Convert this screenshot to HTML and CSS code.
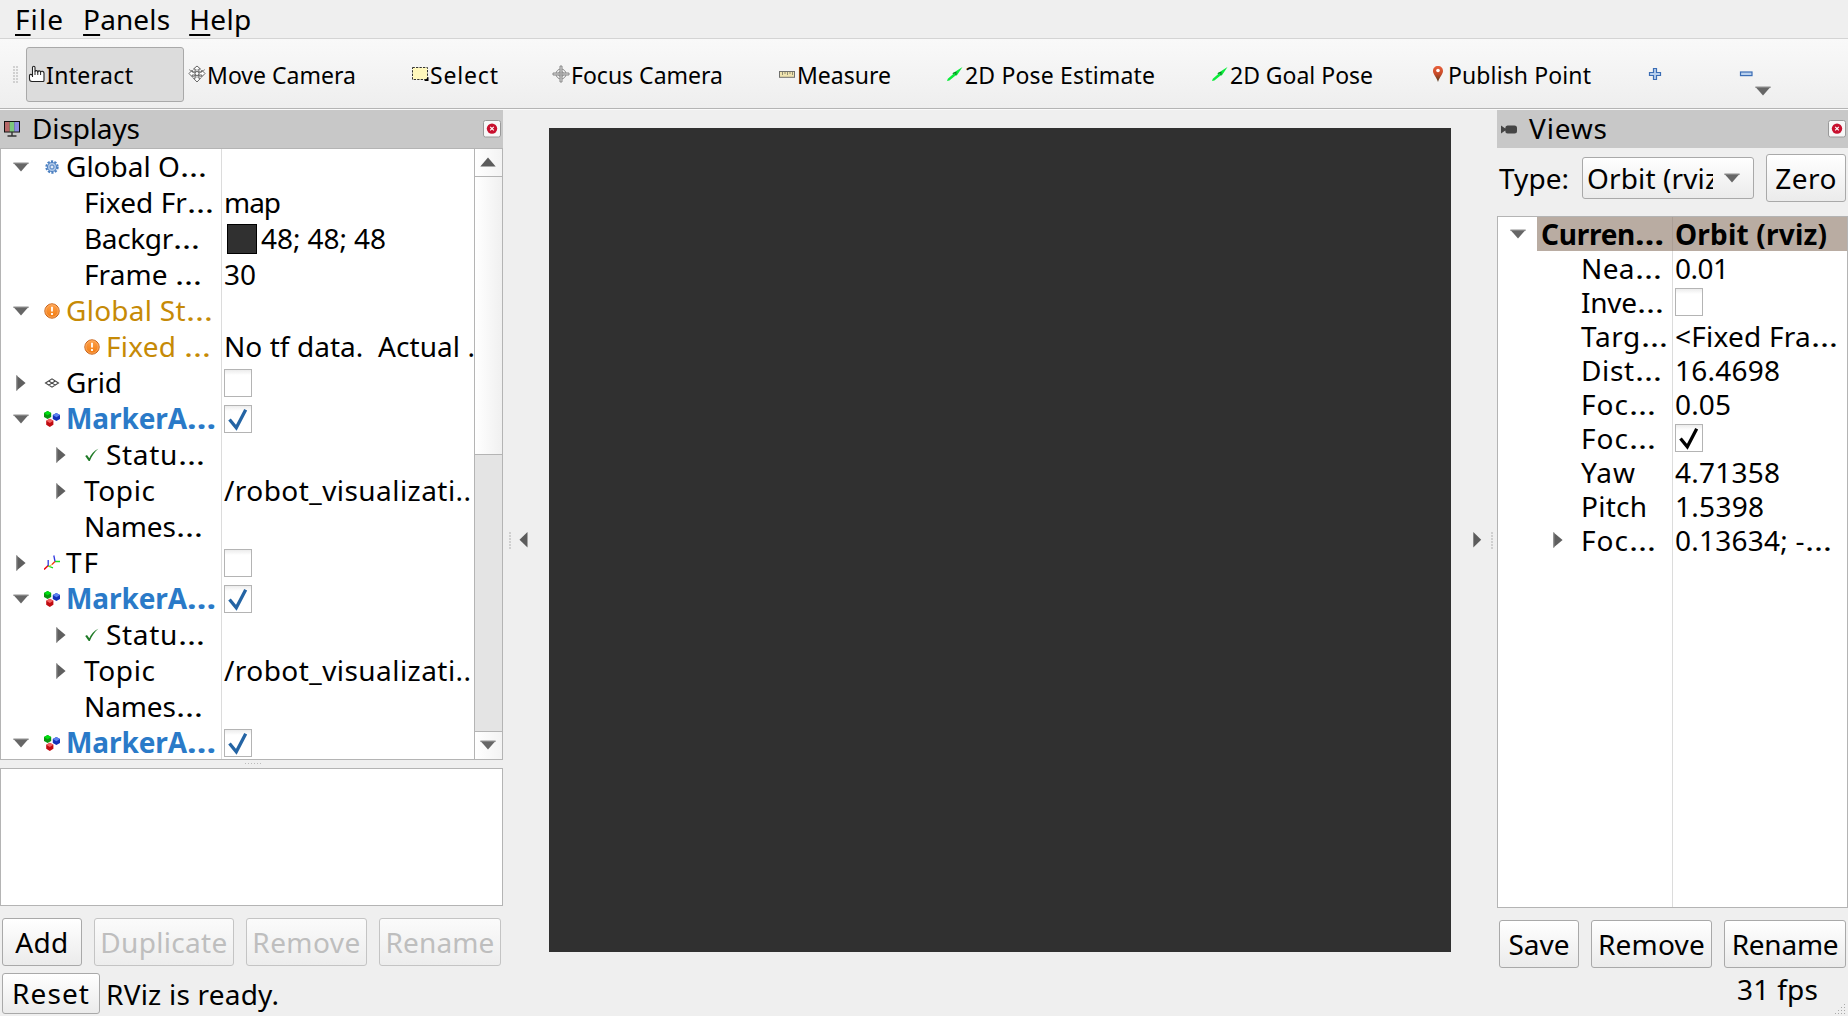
FILE: index.html
```html
<!DOCTYPE html>
<html lang="en">
<head>
<meta charset="utf-8">
<title>RViz</title>
<link rel="stylesheet" href="styles.css">
</head>
<body>
<svg class="defs" width="0" height="0" aria-hidden="true">
  <defs>
    <linearGradient id="orange" x1="0" y1="0" x2="0" y2="1"><stop offset="0" stop-color="#ffa14a"/><stop offset="1" stop-color="#f07a10"/></linearGradient>
    <linearGradient id="pin" x1="0" y1="0" x2="0" y2="1"><stop offset="0" stop-color="#e8603c"/><stop offset=".5" stop-color="#c84a28"/><stop offset="1" stop-color="#4a3a1c"/></linearGradient>
    <symbol id="down" viewBox="0 0 18 18"><path d="M1.3 4.8h15.4L9 13.6z" fill="#666"/><path d="M1.3 4.8h15.4v1H1.3z" fill="#8a8a8a"/></symbol>
    <symbol id="up" viewBox="0 0 18 18"><path d="M1.3 13.4h15.4L9 4.6z" fill="#5c5c5c"/></symbol>
    <symbol id="right" viewBox="0 0 18 18"><path d="M4.3 1.3v15.4L13.6 9z" fill="#5f5f5f"/><path d="M4.3 1.3v15.4h1V1.3z" fill="#999"/></symbol>
    <symbol id="gear" viewBox="0 0 16 16"><circle cx="8" cy="8" r="5.600" fill="none" stroke="#4a7fc0" stroke-width="2.200" stroke-dasharray="2.200 1.320"/><circle cx="8" cy="8" r="4.600" fill="#a9c4e6" stroke="#5284c4"/><circle cx="8" cy="8" r="2" fill="#dfe9f6" stroke="#5284c4"/></symbol>
    <symbol id="warn" viewBox="0 0 16 16"><circle cx="8" cy="8" r="7.200" fill="url(#orange)" stroke="#c8641a"/><circle cx="8" cy="8" r="6.200" fill="none" stroke="#ffb878" stroke-width=".7"/><path d="M8 3.800v4.800M8 10v2" stroke="#fff" stroke-width="1.800"/></symbol>
    <symbol id="grid" viewBox="0 0 16 16"><path d="M1.500 8 8 3.900 14.500 8 8 12.100zM4.700 6l6.600 4.100M11.300 6 4.700 10.100" fill="none" stroke="#444" stroke-width="1.100"/></symbol>
    <symbol id="marker" viewBox="0 0 16 16"><path d="M3.600 0 7.200 2v4L3.600 8 0 6V2z" fill="#0a9410"/><path d="M3.600 0 7.200 2 3.600 4.200 0 2z" fill="#00e010"/><path d="M12.400 2 16 4v4l-3.600 2-3.600-2V4z" fill="#1430b8"/><path d="M12.400 2 16 4l-3.600 2.200L8.800 4z" fill="#5c80f0"/><path d="M5.800 7.800 9.400 9.800v4l-3.600 2.100-3.600-2.100v-4z" fill="#c00a10"/><path d="M5.800 7.800 9.400 9.800 5.800 12 2.200 9.800z" fill="#f46060"/></symbol>
    <symbol id="ok" viewBox="0 0 16 16"><path d="M1.200 9 3 8l2.300 3.200C7.200 7 9.800 4 14.300 1.800 10.500 5.200 8 8.800 5.800 14H4.700z" fill="#1f7a26"/></symbol>
    <symbol id="tf" viewBox="0 0 16 16"><path d="M4.200 10.500 0 14.500" stroke="#f00010" stroke-width="1.600"/><path d="M4.200 11V5" stroke="#3038e0" stroke-width="1.300"/><path d="M4 11l5 1.800M11 6.500h5" stroke="#18e020" stroke-width="1.300"/><path d="M11 6.500 9.800.5" stroke="#3038e0" stroke-width="1.300"/><path d="M11 6.500 8 9.500" stroke="#f03010" stroke-width="1.300"/><path d="m8 9.500-3.500 2" stroke="#e8c020" stroke-width="1"/></symbol>
    <symbol id="check" viewBox="0 0 28 28"><path d="M5.500 14.500 12.300 22.800 21.700 4.700" fill="none" stroke="currentColor" stroke-width="3.300"/></symbol>
    <symbol id="close" viewBox="0 0 18 18"><rect x=".5" y=".5" width="17" height="16.500" rx="2" fill="#f7f7f7" stroke="#999"/><circle cx="9" cy="8.600" r="5.200" fill="#c8102e"/><path d="m7.200 6.800 3.600 3.600M10.800 6.800 7.200 10.400" stroke="#fff" stroke-width="1.200"/></symbol>
    <symbol id="arrow" viewBox="0 0 16 16"><path d="m0 15 .800-2.200L6 8.300l-.300-1L15.500 1 9.800 9.600l-.900-.300-6.500 5.200z" fill="#0cec3c"/><path d="m5.800 7.400 3.600-1.200M8.800 9.200l.200-2.500" stroke="#087a20" stroke-width="1"/></symbol>
  </defs>
</svg>

<nav class="menubar">
  <span data-w="48"><u>F</u>ile</span>
  <span data-w="87"><u>P</u>anels</span>
  <span data-w="62"><u>H</u>elp</span>
</nav>

<div class="toolbar">
  <i class="dots vertical"></i>
  <div class="tool interact active">
    <svg width="18" height="18" viewBox="0 0 18 18"><path d="M4.500 10V2.500C4.500.8 7 .8 7 2.500V6.500C7.300 5.300 9.600 5.400 9.800 6.700 10.300 5.500 12.400 5.700 12.600 6.900 13.500 5.900 16 6.200 16 8V15.500Q16 16.500 15 16.500H4Q1.500 16.500 1.500 14V10.500C1.500 9 3.500 9 4.500 10.500V12" fill="#fff" stroke="#222" stroke-width="1.100"/><path d="M7 6v4M9.800 6.700V10M12.600 7v3" stroke="#222"/></svg>
    <span data-w="87">Interact</span>
  </div>
  <div class="tool move">
    <svg width="18" height="18" viewBox="0 0 18 18"><g fill="#fff" stroke="#555" stroke-width=".9"><path d="M9 1 12.500 4H10.800v3h3V5.200L17 8.500l-3.200 3.300V10h-3v3.300h1.700L9 17l-3.500-3.700h1.700V10h-3v1.800L1 8.500l3.200-3.300V7h3V4H5.500z"/><path d="M1 4.500 14 12.500M17 4.500 4 12.500M9 4v9" stroke-width=".6"/><circle cx="9" cy="8.500" r="2"/></g></svg>
    <span data-w="149">Move Camera</span>
  </div>
  <div class="tool select">
    <svg width="18" height="16" viewBox="0 0 18 16"><rect x="1.500" y="1.500" width="15" height="12" fill="#fff8bc" stroke="#333" stroke-dasharray="2.300 1.200"/><path d="m17.500 11-4.500 4h4.500z" fill="#000"/></svg>
    <span data-w="68">Select</span>
  </div>
  <div class="tool focus">
    <svg width="18" height="18" viewBox="0 0 18 18"><g fill="none" stroke="#888"><circle cx="9" cy="9" r="5"/><circle cx="9" cy="9" r="2.600"/><path d="M8 1h2v16H8zM1 8h16v2H1z" fill="#ddd"/></g><path d="M9 4v10M4 9h10" stroke="#aaa"/></svg>
    <span data-w="152">Focus Camera</span>
  </div>
  <div class="tool measure">
    <svg width="18" height="18" viewBox="0 0 18 18"><rect x="1.500" y="6.500" width="15" height="5.800" fill="#f0e4b0" stroke="#70706c"/><path d="M4.500 7v3M7 7v2M9.500 7v3M12 7v2M14.500 7v3" stroke="#88846c" stroke-width=".9"/></svg>
    <span data-w="94">Measure</span>
  </div>
  <div class="tool pose">
    <svg width="16" height="16"><use href="#arrow"/></svg>
    <span data-w="190">2D Pose Estimate</span>
  </div>
  <div class="tool goal">
    <svg width="16" height="16"><use href="#arrow"/></svg>
    <span data-w="143">2D Goal Pose</span>
  </div>
  <div class="tool publish">
    <svg width="12" height="18" viewBox="0 0 12 18"><path d="M6 1C3 1 1 3 1 6c0 3.200 3.300 5.500 5 11 1.700-5.500 5-7.800 5-11 0-3-2-5-5-5z" fill="url(#pin)"/><circle cx="6" cy="5.500" r="1.800" fill="#fff"/></svg>
    <span data-w="143">Publish Point</span>
  </div>
  <svg class="plus" width="14" height="14" viewBox="0 0 14 14"><path d="M5.500 1.500h3v4h4v3h-4v4h-3v-4h-4v-3h4z" fill="#b8d0ee" stroke="#3b6db5" stroke-width="1.200"/></svg>
  <svg class="minus" width="14" height="14" viewBox="0 0 14 14"><rect x="1.500" y="5" width="11.500" height="3.600" fill="#b8d0ee" stroke="#3b6db5" stroke-width="1.200"/></svg>
  <svg class="more" width="18" height="18"><use href="#down"/></svg>
</div>

<main class="workspace">
  <section class="dock displays">
    <header class="dock-title">
      <svg width="18" height="18" viewBox="0 0 18 18"><rect x="1.500" y="1.500" width="15" height="10.500" fill="#222" stroke="#111"/><path d="M2 2h4.700v9.500H2z" fill="#b66868"/><path d="M6.700 2h4.600v9.500H6.700z" fill="#7cc87c"/><path d="M11.300 2H16v9.500h-4.700z" fill="#8c8ce0"/><path d="M9 12v3.500M4.500 16h9" stroke="#333" stroke-width="1.400"/></svg>
      <span data-w="108">Displays</span>
      <svg class="close" width="18" height="18"><use href="#close"/></svg>
    </header>
    <div class="tree left">
      <div class="rows">
        <div class="row"><div class="name"><svg class="exp"><use href="#down"/></svg><svg class="ico"><use href="#gear"/></svg><span data-w="141">Global O…</span></div><div class="value"></div></div>
        <div class="row"><div class="name leaf"><span data-w="130">Fixed Fr…</span></div><div class="value"><span data-w="57">map</span></div></div>
        <div class="row"><div class="name leaf"><span data-w="116">Backgr…</span></div><div class="value"><i class="swatch"></i><span data-w="125">48; 48; 48</span></div></div>
        <div class="row"><div class="name leaf"><span data-w="118">Frame …</span></div><div class="value"><span data-w="32">30</span></div></div>
        <div class="row warning"><div class="name"><svg class="exp"><use href="#down"/></svg><svg class="ico"><use href="#warn"/></svg><span data-w="147">Global St…</span></div><div class="value"></div></div>
        <div class="row warning"><div class="name child"><svg class="exp"></svg><svg class="ico"><use href="#warn"/></svg><span data-w="105">Fixed …</span></div><div class="value"><span data-w="251">No tf data.&nbsp; Actual .</span></div></div>
        <div class="row"><div class="name"><svg class="exp"><use href="#right"/></svg><svg class="ico"><use href="#grid"/></svg><span data-w="56">Grid</span></div><div class="value"><i class="box"></i></div></div>
        <div class="row display"><div class="name"><svg class="exp"><use href="#down"/></svg><svg class="ico"><use href="#marker"/></svg><span data-w="150">MarkerA…</span></div><div class="value"><i class="box"><svg><use href="#check"/></svg></i></div></div>
        <div class="row"><div class="name child"><svg class="exp"><use href="#right"/></svg><svg class="ico"><use href="#ok"/></svg><span data-w="99">Statu…</span></div><div class="value"></div></div>
        <div class="row"><div class="name child"><svg class="exp"><use href="#right"/></svg><span data-w="71">Topic</span></div><div class="value"><span data-w="247">/robot_visualizati..</span></div></div>
        <div class="row"><div class="name leaf"><span data-w="119">Names…</span></div><div class="value"></div></div>
        <div class="row"><div class="name"><svg class="exp"><use href="#right"/></svg><svg class="ico"><use href="#tf"/></svg><span data-w="32">TF</span></div><div class="value"><i class="box"></i></div></div>
        <div class="row display"><div class="name"><svg class="exp"><use href="#down"/></svg><svg class="ico"><use href="#marker"/></svg><span data-w="150">MarkerA…</span></div><div class="value"><i class="box"><svg><use href="#check"/></svg></i></div></div>
        <div class="row"><div class="name child"><svg class="exp"><use href="#right"/></svg><svg class="ico"><use href="#ok"/></svg><span data-w="99">Statu…</span></div><div class="value"></div></div>
        <div class="row"><div class="name child"><svg class="exp"><use href="#right"/></svg><span data-w="71">Topic</span></div><div class="value"><span data-w="247">/robot_visualizati..</span></div></div>
        <div class="row"><div class="name leaf"><span data-w="119">Names…</span></div><div class="value"></div></div>
        <div class="row display"><div class="name"><svg class="exp"><use href="#down"/></svg><svg class="ico"><use href="#marker"/></svg><span data-w="150">MarkerA…</span></div><div class="value"><i class="box"><svg><use href="#check"/></svg></i></div></div>
      </div>
      <div class="scrollbar">
        <div class="step top"><svg class="exp"><use href="#up"/></svg></div>
        <div class="thumb"></div>
        <div class="track"></div>
        <div class="step bottom"><svg class="exp"><use href="#down"/></svg></div>
      </div>
    </div>
    <div class="splitter"><i class="dots horizontal"></i></div>
    <div class="details"></div>
    <div class="buttons">
      <button class="add"><span data-w="53">Add</span></button>
      <button class="duplicate" disabled><span data-w="127">Duplicate</span></button>
      <button class="remove" disabled><span data-w="108">Remove</span></button>
      <button class="rename" disabled><span data-w="109">Rename</span></button>
    </div>
    <footer class="status">
      <button class="reset"><span data-w="77">Reset</span></button>
      <span data-w="173">RViz is ready.</span>
    </footer>
  </section>

  <div class="handle before"><i class="dots vertical"></i><svg width="9" height="16"><path d="M8.500 0v15.500L.5 7.700z"/></svg></div>
  <div class="viewport"></div>
  <div class="handle after"><svg width="9" height="16"><path d="M.3 0v15.500l7.900-7.800z"/></svg><i class="dots vertical"></i></div>

  <section class="dock views">
    <header class="dock-title">
      <svg width="18" height="18" viewBox="0 0 18 18"><path d="m1 5.500 4.300 3V8Q5.300 5.500 7.500 5.500h7Q17 5.500 17 8v3q0 2.500-2.500 2.500h-7Q5.300 13.500 5.300 11v-.5L1 13.500z" fill="#454545"/></svg>
      <span data-w="78">Views</span>
      <svg class="close" width="18" height="18"><use href="#close"/></svg>
    </header>
    <div class="type">
      <span data-w="70">Type:</span>
      <div class="combo"><div class="current"><span data-w="131">Orbit (rviz</span></div><svg class="exp"><use href="#down"/></svg></div>
      <button class="zero"><span data-w="61">Zero</span></button>
    </div>
    <div class="tree right">
      <div class="row selected"><div class="name root"><svg class="exp"><use href="#down"/></svg><div class="fill"><span data-w="123">Curren…</span></div></div><div class="value"><span data-w="152">Orbit (rviz)</span></div></div>
      <div class="row"><div class="name"><span data-w="81">Nea…</span></div><div class="value"><span data-w="54">0.01</span></div></div>
      <div class="row"><div class="name"><span data-w="83">Inve…</span></div><div class="value"><i class="box"></i></div></div>
      <div class="row"><div class="name"><span data-w="87">Targ…</span></div><div class="value"><span data-w="163">&lt;Fixed Fra…</span></div></div>
      <div class="row"><div class="name"><span data-w="81">Dist…</span></div><div class="value"><span data-w="105">16.4698</span></div></div>
      <div class="row"><div class="name"><span data-w="75">Foc…</span></div><div class="value"><span data-w="56">0.05</span></div></div>
      <div class="row"><div class="name"><span data-w="75">Foc…</span></div><div class="value"><i class="box"><svg><use href="#check"/></svg></i></div></div>
      <div class="row"><div class="name"><span data-w="54">Yaw</span></div><div class="value"><span data-w="105">4.71358</span></div></div>
      <div class="row"><div class="name"><span data-w="66">Pitch</span></div><div class="value"><span data-w="89">1.5398</span></div></div>
      <div class="row"><div class="name nested"><svg class="exp"><use href="#right"/></svg><span data-w="75">Foc…</span></div><div class="value"><span data-w="157">0.13634; -…</span></div></div>
      <div class="rest"></div>
    </div>
    <div class="buttons">
      <button class="save"><span data-w="61">Save</span></button>
      <button class="remove"><span data-w="107">Remove</span></button>
      <button class="rename"><span data-w="107">Rename</span></button>
    </div>
    <footer class="fps">
      <span data-w="81">31 fps</span>
      <svg class="grip" width="12" height="12"><path d="M10.500 0v12M7.500 3v9M4.500 6v6M1.500 9v3" stroke="#aaa" stroke-dasharray="1 2"/></svg>
    </footer>
  </section>
</main>
<script src="labels.js"></script>
</body>
</html>
```

FILE: labels.js
```js
// Tracks each label so that it fills the width given in data-w.
// A closing ellipsis is set wider than the text it follows.
document.querySelectorAll('[data-w]').forEach(function (label) {
  var target = Number(label.dataset.w);
  if (label.textContent.endsWith('…')) {
    label.innerHTML = label.innerHTML.replace('…', '<b class="ellipsis">…</b>');
  }
  var natural = label.getBoundingClientRect().width;
  var gaps = label.textContent.length - 1;
  label.style.letterSpacing = (target - natural) / gaps + 'px';
});
```

FILE: styles.css
```css
* { box-sizing: border-box; }

body {
  margin: 0;
  width: 1848px;
  height: 1016px;
  overflow: hidden;
  display: flex;
  flex-direction: column;
  background: #efefef;
  color: #000;
  font: 28px/34px "Noto Sans", "Open Sans", sans-serif;
}

svg { display: block; flex: none; }
.defs { position: absolute; }
span { white-space: pre; flex: none; }
.ellipsis {
  display: inline-block;
  margin-right: 5px;
  font-weight: inherit;
  letter-spacing: 0;
  transform: scaleX(1.22);
  transform-origin: 0 0;
}

/* menu */
.menubar {
  flex: none;
  height: 39px;
  display: flex;
  padding: 2px 0 0 15px;
  border-bottom: 1px solid #d4d4d4;
}
.menubar span { margin-right: 19px; }
.menubar u { text-decoration-thickness: 2px; text-underline-offset: 4px; text-decoration-skip-ink: none; }

/* toolbar */
.toolbar {
  flex: none;
  height: 71px;
  display: flex;
  align-items: center;
  padding: 0 0 0 13px;
  border-bottom: 1px solid #fafafa;
  box-shadow: inset 0 -1px #b4b4b4;
  background: linear-gradient(#f9f9f9, #eee);
  font-size: 23px;
}
.tool { display: flex; align-items: center; height: 55px; flex: none; }
.tool svg { margin-bottom: 1px; }
.tool span { margin-left: 1px; padding-top: 1px; }
.interact { width: 158px; margin-left: 8px; padding-left: 1px; }
.interact span { margin-left: 0; }
.active { border: 1px solid #a9a9a9; border-radius: 3px; background: #dcdcdc; }
.move { margin-left: 4px; width: 223px; }
.select { width: 141px; }
.focus { width: 226px; }
.measure { width: 169px; }
.pose { width: 265px; }
.pose span, .goal span { margin-left: 2px; }
.goal { width: 220px; }
.publish { width: 216px; }
.publish span { margin-left: 4px; }
.plus { margin-right: 77px; }
.minus { margin-right: 1px; }
.more { margin-top: 33px; }

.dots { display: block; flex: none; }
.dots.vertical {
  width: 5px;
  height: 17px;
  background: radial-gradient(circle at 1px 1px, #c4c4c4 .6px, transparent 1px) 0 0 / 3px 3px;
}
.dots.horizontal {
  width: 17px;
  height: 1px;
  background: repeating-linear-gradient(90deg, #bbb 0 1px, transparent 1px 3px);
}

/* docks */
.workspace { flex: 1; display: flex; min-height: 0; }
.dock { display: flex; flex-direction: column; flex: none; }
.dock span { padding-bottom: 1px; }
.displays { width: 503px; }
.views { width: 351px; }
.dock-title {
  height: 38px;
  flex: none;
  display: flex;
  align-items: center;
  padding-left: 3px;
  background: #c8c8c8;
}
.dock-title span { margin-left: 11px; padding-bottom: 2px; }
.dock-title .close { margin: 0 2px 1px auto; }

.tree { display: flex; background: #fff; border: 1px solid #b4b4b4; flex: none; }
.row { display: flex; flex: none; }
.name { display: flex; align-items: center; flex: none; border-right: 1px solid #dcdcdc; }
.value { display: flex; align-items: center; flex: 1; min-width: 0; }
.exp { width: 18px; height: 18px; margin-bottom: 1px; }
.ico { width: 16px; height: 16px; margin-bottom: 1px; }
.box {
  display: block;
  flex: none;
  width: 28px;
  height: 28px;
  border: 1px solid #b4b4b4;
  background: linear-gradient(#ececec, #fff 5px);
}
.box svg { width: 28px; height: 28px; margin: -1px; }

.left { height: 612px; }
.left .rows { width: 473px; overflow: hidden; }
.left .row { height: 36px; }
.left .row span { padding-bottom: 2px; }
.left .name { width: 221px; padding-left: 11px; }
.left .child { padding-left: 51px; }
.left .leaf { padding-left: 83px; }
.left .name .exp + .ico { margin-left: 14px; }
.left .name .ico + span { margin-left: 6px; }
.left .name.child .exp + span { margin-left: 14px; }
.left .value { padding-left: 2px; }
.left .value .swatch + span { margin-left: 4px; }
.left .box { color: #2464a4; }
.swatch { width: 30px; height: 30px; margin-left: 3px; background: #303030; border: 1px solid #000; }
.warning .name span { color: #c68a06; }
.display .name span { color: #2a7ac8; font-weight: bold; }

.scrollbar { width: 28px; display: flex; flex-direction: column; border-left: 1px solid #b4b4b4; }
.step { display: flex; align-items: center; justify-content: center; background: linear-gradient(90deg, #fff, #f3f3f3); }
.step .exp { margin-right: 1px; }
.top { height: 28px; border-bottom: 1px solid #b4b4b4; }
.thumb { height: 278px; border-bottom: 1px solid #b4b4b4; background: linear-gradient(90deg, #fff, #f0f0f0); }
.track { flex: 1; background: #e4e4e4; }
.bottom { height: 28px; border-top: 1px solid #b4b4b4; }

.splitter { height: 8px; display: flex; justify-content: center; padding: 3px 0 0 3px; }
.details { height: 138px; background: #fff; border: 1px solid #b4b4b4; }

button {
  display: flex;
  align-items: center;
  justify-content: center;
  flex: none;
  height: 48px;
  padding: 0;
  border: 1px solid #a9a9a9;
  border-radius: 3px;
  background: linear-gradient(#fff, #ebebeb);
  color: #000;
  font: inherit;
}
button:disabled { color: #bebebe; border-color: #c4c4c4; background: linear-gradient(#fbfbfb, #ededed); }
.buttons { display: flex; gap: 12px; padding: 12px 0 0 2px; }
.add, .save, .zero { width: 80px; }
.duplicate { width: 140px; }
.remove { width: 121px; }
.rename { width: 122px; }
.status { display: flex; padding: 7px 0 0 2px; line-height: 42px; }
.reset { width: 98px; height: 41px; }
.status > span { margin-left: 6px; }

/* center */
.handle { width: 46px; flex: none; display: flex; align-items: center; height: 860px; }
.handle path { fill: #5c5c5c; }
.handle .dots { width: 2px; }
.before { padding-left: 6px; gap: 8px; }
.after { padding-left: 22px; gap: 9px; }
.viewport { width: 902px; height: 824px; margin-top: 18px; background: #303030; flex: none; }

/* views */
.type { height: 68px; display: flex; align-items: center; padding: 0 0 8px 2px; }
.combo {
  width: 172px;
  height: 42px;
  margin: 0 12px 0 13px;
  display: flex;
  align-items: center;
  border: 1px solid #a9a9a9;
  border-radius: 3px;
  background: linear-gradient(#fff, #ebebeb);
}
.current { width: 130px; padding-left: 4px; overflow: hidden; display: flex; flex: none; }
.combo .exp { margin-left: 10px; }

.right { height: 692px; flex-direction: column; }
.right .row { height: 34px; }
.right .name { width: 175px; padding-left: 83px; }
.right .name.root { padding-left: 11px; }
.right .name.nested { padding-left: 51px; }
.right .nested span { margin-left: 14px; }
.right .value { padding-left: 2px; }
.fill { flex: 1; height: 34px; margin-left: 11px; padding-left: 3px; display: flex; align-items: center; }
.right .root .fill { margin-left: 10px; padding-left: 4px; }
.selected .fill, .selected .value { background: #b9aca2; }
.selected .name { border-color: #ac9f96; }
.selected span { font-weight: bold; }
.rest { width: 175px; flex: 1; border-right: 1px solid #dcdcdc; }
.fps { display: flex; padding: 4px 2px 0 240px; }
.grip { margin: 32px 0 0 auto; }
```
